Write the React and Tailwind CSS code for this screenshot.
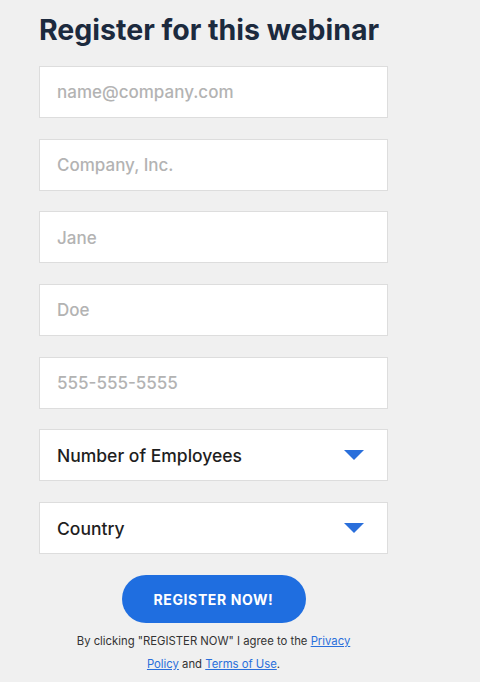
import React from "react";

const fields = ["name@company.com", "Company, Inc.", "Jane", "Doe", "555-555-5555"];
const selects = ["Number of Employees", "Country"];

const Caret = () => (
  <svg width="20" height="10" viewBox="0 0 20 10" className="shrink-0">
    <path d="M0 0 H20 L10 10 Z" fill="#2a6fdb" />
  </svg>
);

const App = () => {
  return (
    <div
      className="min-h-[682px] w-[480px] bg-[#f0f0f0] pl-[39px] pt-[11px]"
      style={{ fontFamily: "Inter, 'Open Sans', sans-serif" }}
    >
      <div className="w-[349px]">
        <h1 className="text-[28.5px] font-bold leading-[37px] text-[#1c2a3e] whitespace-nowrap">
          Register for this webinar
        </h1>

        <div className="mt-[18px] flex flex-col gap-[20.7px]">
          {fields.map((f) => (
            <div
              key={f}
              className="h-[52px] bg-white border border-[#dddddd] flex items-center px-[17px] pt-[2px]"
            >
              <input
                placeholder={f}
                className="w-full bg-transparent outline-none text-[17px] font-medium placeholder:text-[#b3b3b3]"
              />
            </div>
          ))}
          {selects.map((s) => (
            <div
              key={s}
              className="h-[52px] bg-white border border-[#dddddd] flex items-center justify-between pl-[17px] pr-[23px]"
            >
              <span className="text-[17.5px] font-medium text-[#1e1e1e] pt-[2px]">{s}</span>
              <Caret />
            </div>
          ))}
        </div>

        <div className="mt-[21px] flex justify-center">
          <button className="w-[184px] h-[48px] rounded-full bg-[#1f6ee0] text-white text-[14px] font-bold tracking-[0.6px]">
            REGISTER NOW!
          </button>
        </div>

        <p className="mt-[7px] text-center text-[11.3px] leading-[23px] text-[#333333]">
          By clicking "REGISTER NOW" I agree to the{" "}
          <a href="#" className="text-[#2a6fdb] underline">Privacy</a>
          <br />
          <a href="#" className="text-[#2a6fdb] underline">Policy</a> and{" "}
          <a href="#" className="text-[#2a6fdb] underline">Terms of Use</a>.
        </p>
      </div>
    </div>
  );
};

export default App;
